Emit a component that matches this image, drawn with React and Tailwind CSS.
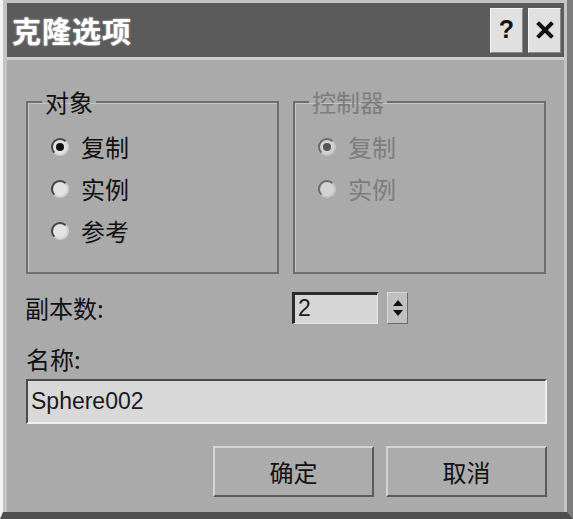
import React from "react";

const cjk = { fontFamily: '"Noto Sans CJK SC", "Noto Sans", sans-serif' };

const Radio = ({ label, checked, disabled }) => (
  <div className="flex h-[42px] items-center">
    <span
      className={
        "ml-[23px] flex h-[18px] w-[18px] items-center justify-center rounded-full border-2 " +
        (disabled
          ? "border-t-[#6a6a6a] border-l-[#6a6a6a] border-r-[#c4c4c4] border-b-[#c4c4c4] bg-[#d2d2d2]"
          : "border-t-[#444] border-l-[#444] border-r-[#d0d0d0] border-b-[#d0d0d0] bg-[#e2e2e2]")
      }
    >
      {checked && (
        <span
          className={
            "h-[8px] w-[8px] rounded-full " +
            (disabled ? "bg-[#555]" : "bg-[#111]")
          }
        />
      )}
    </span>
    <span
      className={
        "ml-[12px] text-[24px] leading-none " +
        (disabled ? "text-[#7d7d7d]" : "text-[#111]")
      }
    >
      {label}
    </span>
  </div>
);

const Group = ({ title, disabled, children }) => (
  <fieldset
    className="h-[187px] w-[253px] border-2 border-[#6e6e6e] px-0 pt-[9px] shadow-[inset_1px_1px_0_#c4c4c4]"
  >
    <legend
      className={
        "ml-[14px] px-[3px] text-[24px] leading-[30px] " +
        (disabled ? "text-[#7d7d7d]" : "text-[#111]")
      }
    >
      {title}
    </legend>
    {children}
  </fieldset>
);

export default function App() {
  return (
    <div
      className="flex h-[519px] w-[573px] flex-col border-b-[7px] border-l-[3px] border-r-[6px] border-b-[#4f4f4f] border-l-[#f3f3f3] border-r-[#7c7c7c] bg-[#c4c4c4] pl-[4px] pr-[3px] pt-[3px]"
      style={cjk}
    >
      <div className="flex h-[54px] items-center bg-[#5b5b5b] pl-[5px] pr-[3px]">
        <span className="text-[29px] font-bold leading-none tracking-[1px] text-white [text-shadow:0_0_2px_#ddd]">
          克隆选项
        </span>
        <div className="ml-auto flex gap-[5px]">
          <button className="flex h-[45px] w-[33px] items-center justify-center border border-b-[#8a8a8a] border-l-[#f4f4f4] border-r-[#8a8a8a] border-t-[#f4f4f4] bg-[#e0e0e0] text-[25px] font-bold text-[#111]" style={{ fontFamily: '"Liberation Sans", sans-serif' }}>
            ?
          </button>
          <button className="flex h-[45px] w-[33px] items-center justify-center border border-b-[#8a8a8a] border-l-[#f4f4f4] border-r-[#8a8a8a] border-t-[#f4f4f4] bg-[#e0e0e0]">
            <svg width="18" height="18" viewBox="0 0 18 18">
              <path d="M3 3 L15 15 M15 3 L3 15" stroke="#111" strokeWidth="4" strokeLinecap="square" />
            </svg>
          </button>
        </div>
      </div>
      <div className="h-[3px] bg-[#cdcdcd]" />
      <div className="flex flex-1 flex-col bg-[#aaaaaa] pl-[19px] pr-[17px] pt-[27px]">
        <div className="flex gap-[14px]">
          <Group title="对象">
            <Radio label="复制" checked />
            <Radio label="实例" />
            <Radio label="参考" />
          </Group>
          <Group title="控制器" disabled>
            <Radio label="复制" checked disabled />
            <Radio label="实例" disabled />
          </Group>
        </div>

        <div className="mt-[17px] flex h-[33px] items-center">
          <span className="ml-[-1px] w-[267px] text-[24px] leading-none text-[#111]">副本数:</span>
          <div className="flex h-[32px] w-[86px] items-center border-l-[3px] border-t-[3px] border-b border-r border-l-[#2a2a2a] border-t-[#2a2a2a] border-b-[#e4e4e4] border-r-[#e4e4e4] bg-[#d6d6d6] pl-[3px]">
            <span className="text-[23px] leading-none text-[#1a1a1a]" style={{ fontFamily: '"Liberation Sans", sans-serif' }}>
              2
            </span>
          </div>
          <div className="ml-[9px] flex h-[32px] w-[21px] flex-col items-center justify-center gap-[4px] border border-b-[#6a6a6a] border-l-[#d8d8d8] border-r-[#6a6a6a] border-t-[#d8d8d8] bg-[#c0c0c0]">
            <svg width="10" height="6" viewBox="0 0 10 6"><path d="M5 0 L10 6 L0 6 Z" fill="#111" /></svg>
            <svg width="10" height="6" viewBox="0 0 10 6"><path d="M0 0 L10 0 L5 6 Z" fill="#111" /></svg>
          </div>
        </div>

        <div className="mt-[20px] text-[24px] leading-[30px] text-[#111]">名称:</div>
        <div className="mt-[5px] flex h-[45px] items-center border-l-2 border-t-2 border-b-2 border-r-2 border-l-[#4a4a4a] border-t-[#4a4a4a] border-b-[#efefef] border-r-[#efefef] bg-[#d8d8d8] pl-[3px]">
          <span className="text-[23px] leading-none text-[#1a1a1a]" style={{ fontFamily: '"Liberation Sans", sans-serif' }}>
            Sphere002
          </span>
        </div>

        <div className="mt-[22px] flex justify-end gap-[12px]">
          <button className="h-[51px] w-[161px] border-2 border-b-[#5a5a5a] border-l-[#d4d4d4] border-r-[#5a5a5a] border-t-[#d4d4d4] bg-[#acacac] text-[24px] leading-none text-[#111]">
            确定
          </button>
          <button className="h-[51px] w-[161px] border-2 border-b-[#5a5a5a] border-l-[#d4d4d4] border-r-[#5a5a5a] border-t-[#d4d4d4] bg-[#acacac] text-[24px] leading-none text-[#111]">
            取消
          </button>
        </div>
      </div>
    </div>
  );
}
